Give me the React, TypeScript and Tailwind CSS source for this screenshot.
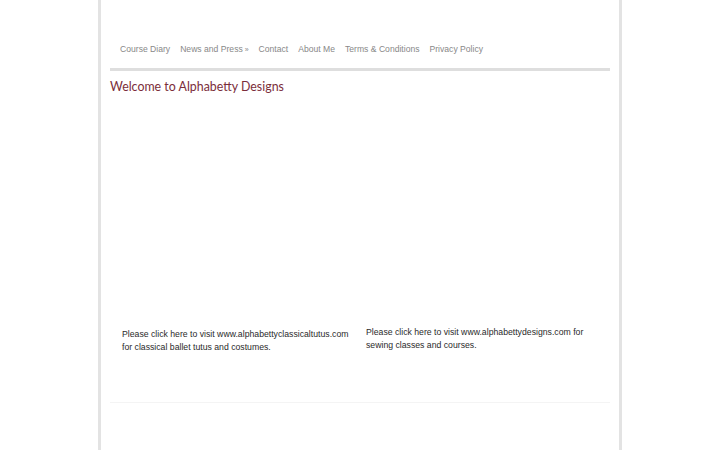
export default function App() {
  const nav = ['Course Diary', 'News and Press', 'Contact', 'About Me', 'Terms & Conditions', 'Privacy Policy'];
  return (
    <div className="min-h-[450px] w-full bg-white">
      <div className="ml-[98px] h-[450px] w-[524px] border-x-[3px] border-[#e3e3e3] bg-white px-[9px]">
        {/* Nav */}
        <div className="flex h-[68px] items-end gap-[10px] pb-[14px] pl-[10px] font-['Liberation_Sans',sans-serif] text-[8.6px] text-[#888]">
          {nav.map((item) => (
            <span key={item} className="leading-none">
              {item}
              {item === 'News and Press' && <span className="text-[7px]"> »</span>}
            </span>
          ))}
        </div>
        <div className="h-[3px] bg-[#dedede]" />

        <h1 className="mt-[8px] font-['Lato',sans-serif] text-[12.4px] leading-[16px] text-[#7b2d3a]">
          Welcome to Alphabetty Designs
        </h1>

        {/* Image area (empty) */}
        <div className="h-[231px]" />

        <div className="flex font-['Liberation_Sans',sans-serif] text-[8.7px] leading-[13px] text-[#2a2a2a]">
          <p className="ml-[12px] mt-[2px] w-[232px]">
            Please click here to visit www.alphabettyclassicaltutus.com for classical ballet tutus and costumes.
          </p>
          <p className="ml-[12px] w-[230px]">
            Please click here to visit www.alphabettydesigns.com for sewing classes and courses.
          </p>
        </div>

        <div className="mt-[48px] h-px bg-[#f4f4f4]" />
      </div>
    </div>
  );
}
